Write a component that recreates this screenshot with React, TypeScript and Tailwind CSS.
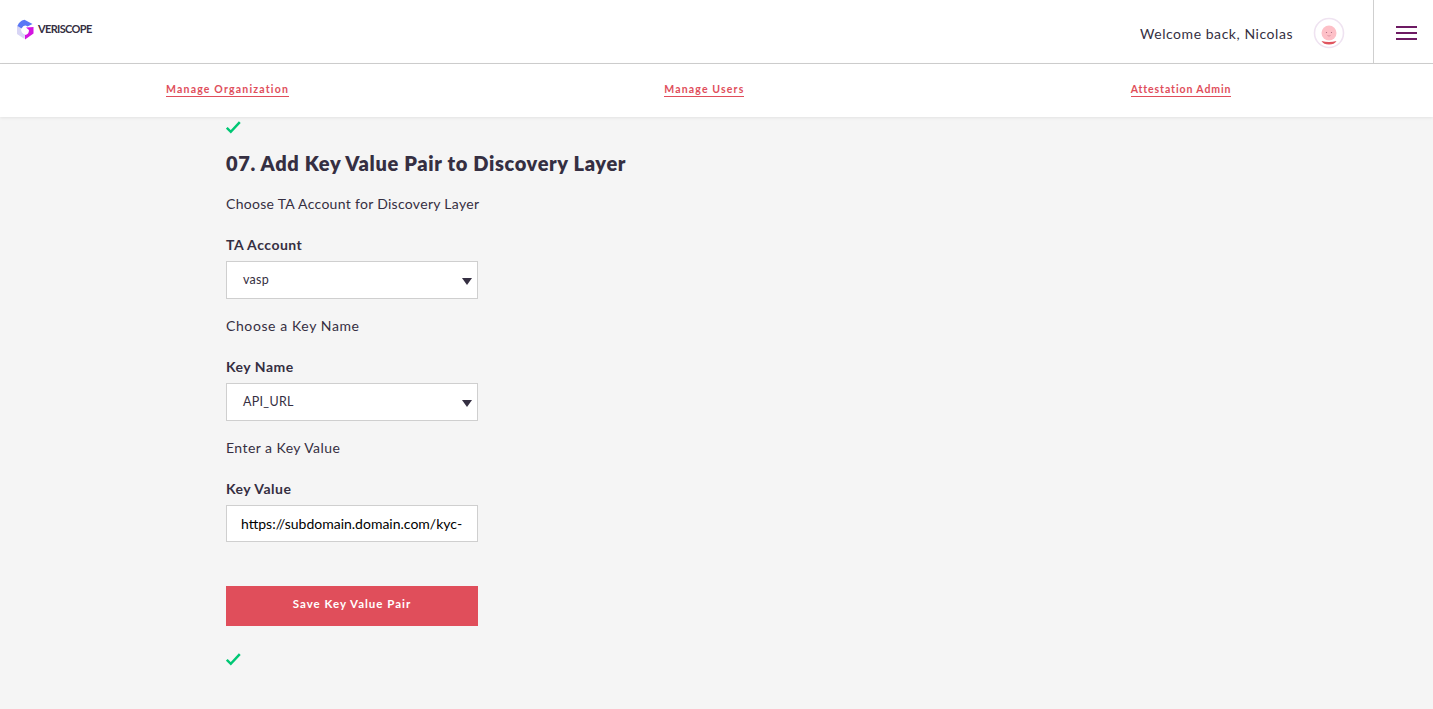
import React from 'react';

const Check = () => (
  <svg width="15" height="13" viewBox="0 0 15 13" className="block">
    <path d="M0.8 6.800l4 4L13.800 1.200" fill="none" stroke="#00c774" strokeWidth="2.500" />
  </svg>
);

const Logo = () => (
  <svg width="20" height="21" viewBox="0 0 20 21" className="block">
    <path d="M2 6v9l7.500 5 .5-4.500Q6 14.500 6 9.500z" fill="#d8d5f5" />
    <path d="M18.500 8v6.500L10 20.500V16q4-.5 4-5l-3-2.500z" fill="#d414e0" />
    <path d="M2.500 7Q4 2 9.500 .8L17.500 5 12.500 7.500Q9 5 6.500 9.500z" fill="#5a78f5" />
  </svg>
);

const Avatar = () => (
  <svg width="32" height="32" viewBox="0 0 32 32" className="block">
    <circle cx="16" cy="16" r="14.500" fill="#fff" stroke="#efe3f1" strokeWidth="1.600" />
    <circle cx="16" cy="16" r="7.500" fill="#fdc0c7" />
    <circle cx="13.500" cy="15.500" r="0.600" fill="#a8657a" />
    <circle cx="18.500" cy="15.500" r="0.600" fill="#a8657a" />
    <path d="M14.500 18.500q1.500 1.200 3 0" fill="none" stroke="#c9788a" strokeWidth="0.600" />
    <path d="M8.500 24q7.500 2 15 0q-2 3.500-7.500 3.500t-7.500-3.500z" fill="#e0545f" />
  </svg>
);

const NavLink = ({ label, className }: { label: string; className: string }) => (
  <a className={`border-b border-[#e04e5b] pb-px text-[10.5px] leading-[13px] font-bold text-[#e04e5b] ${className}`}>
    {label}
  </a>
);

const SelectField = ({ label, value }: { label: string; value: string }) => (
  <div>
    <div className="text-[14px] leading-[18px] font-bold tracking-[0.5px] text-[#352f42]">{label}</div>
    <div className="mt-[7px] flex h-[38px] w-[252px] items-center justify-between border border-[#cfcfcf] bg-white pr-[5px] pl-4 text-[12.5px] tracking-[0.3px] text-[#352f42]">
      <span>{value}</span>
      <span className="mt-[2px] h-0 w-0 border-x-[5.500px] border-t-[7px] border-x-transparent border-t-[#352f42]" />
    </div>
  </div>
);

const Hint = ({ children, className }: { children: React.ReactNode; className: string }) => (
  <p className={`text-[14px] leading-[18px] text-[#352f42] ${className}`}>{children}</p>
);

export default function App() {
  return (
    <div className="min-h-[709px] bg-[#f5f5f5] font-['Lato','Liberation_Sans',sans-serif]">
      <header className="flex h-[64px] items-stretch border-b border-[#cfcfcf] bg-white shadow-[0_1px_3px_rgba(0,0,0,0.12)]">
        <div className="flex items-center pb-[5px] pl-[15px]">
          <Logo />
          <span className="ml-[3px] text-[11px] font-bold tracking-[-0.65px] text-[#352f42]">VERISCOPE</span>
        </div>
        <div className="ml-auto flex items-center pt-[3px]">
          <span className="text-[14px] tracking-[0.55px] text-[#352f42]">Welcome back, Nicolas</span>
          <div className="mr-[28px] ml-[20px]">
            <Avatar />
          </div>
        </div>
        <div className="flex w-[60px] flex-col items-center justify-center gap-[4px] border-l border-[#cfcfcf] pt-[3px] pl-[6px]">
          <span className="h-[2px] w-[21px] bg-[#6d1a63]" />
          <span className="h-[2px] w-[21px] bg-[#6d1a63]" />
          <span className="h-[2px] w-[21px] bg-[#6d1a63]" />
        </div>
      </header>

      <nav className="grid h-[53px] grid-cols-3 items-center bg-white pr-[25px] pb-[7px] shadow-[0_1px_3px_rgba(0,0,0,0.08)]">
        <div className="pl-[166px]">
          <NavLink label="Manage Organization" className="tracking-[1.2px]" />
        </div>
        <div className="pl-[195px]">
          <NavLink label="Manage Users" className="tracking-[1.15px]" />
        </div>
        <div className="pl-[192px]">
          <NavLink label="Attestation Admin" className="tracking-[0.9px]" />
        </div>
      </nav>

      <main className="pt-[4px] pl-[226px]">
        <Check />
        <h1 className="mt-[17px] text-[20px] leading-[24px] font-extrabold tracking-[0.65px] text-[#352f42]">
          07. Add Key Value Pair to Discovery Layer
        </h1>
        <div className="mt-[20px]">
          <Hint className="tracking-[0.3px]">Choose TA Account for Discovery Layer</Hint>
        </div>
        <div className="mt-[23px]">
          <SelectField label="TA Account" value="vasp" />
        </div>
        <div className="mt-[18px]">
          <Hint className="tracking-[0.6px]">Choose a Key Name</Hint>
        </div>
        <div className="mt-[23px]">
          <SelectField label="Key Name" value="API_URL" />
        </div>
        <div className="mt-[18px]">
          <Hint className="tracking-[0.45px]">Enter a Key Value</Hint>
        </div>
        <div className="mt-[23px] text-[14px] leading-[18px] font-bold tracking-[0.5px] text-[#352f42]">Key Value</div>
        <input
          readOnly
          value="https://subdomain.domain.com/kyc-"
          className="mt-[7px] block h-[37px] w-[252px] border border-[#cfcfcf] bg-white px-[14px] text-[14px] tracking-normal text-black outline-none"
        />
        <button className="mt-[44px] block h-[40px] w-[252px] bg-[#e04e5b] pb-[5px] text-center text-[11.5px] font-bold tracking-[1px] text-white">
          Save Key Value Pair
        </button>
        <div className="mt-[27px]">
          <Check />
        </div>
      </main>
    </div>
  );
}
